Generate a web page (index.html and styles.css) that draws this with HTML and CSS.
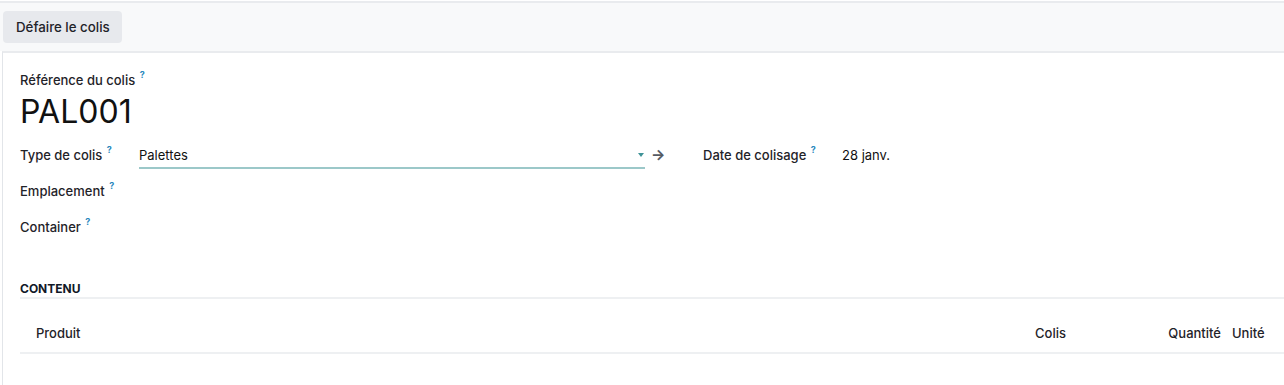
FILE: index.html
```html
<!DOCTYPE html>
<html lang="fr">
<head>
    <meta charset="UTF-8">
    <title>PAL001</title>
    <link rel="stylesheet" href="styles.css">
</head>
<body>
    <div class="control-panel">
        <button class="btn-secondary">Défaire le colis</button>
    </div>

    <div class="sheet">
        <div class="title-block">
            <div class="field-label">Référence du colis <sup class="help">?</sup></div>
            <h1 class="record-name">PAL001</h1>
        </div>

        <div class="groups">
            <div class="group">
                <div class="field-row">
                    <div class="field-label">Type de colis <sup class="help">?</sup></div>
                    <div class="many2one">
                        <div class="m2o-input">
                            <span>Palettes</span>
                            <span class="caret"></span>
                        </div>
                        <span class="external-link">&#8594;</span>
                    </div>
                </div>
                <div class="field-row">
                    <div class="field-label">Emplacement <sup class="help">?</sup></div>
                </div>
                <div class="field-row">
                    <div class="field-label">Container <sup class="help">?</sup></div>
                </div>
            </div>
            <div class="group">
                <div class="field-row">
                    <div class="field-label date-label">Date de colisage <sup class="help">?</sup></div>
                    <div class="field-value">28 janv.</div>
                </div>
            </div>
        </div>

        <div class="separator">Contenu</div>

        <table class="list-table">
            <thead>
                <tr>
                    <th class="col-product">Produit</th>
                    <th class="col-package">Colis</th>
                    <th class="col-qty">Quantité</th>
                    <th class="col-uom">Unité</th>
                </tr>
            </thead>
        </table>
    </div>
</body>
</html>
```

FILE: styles.css
```css
body {
    margin: 0;
    padding-top: 1px;
    background-color: #fff;
    font-family: Inter, "Noto Sans", sans-serif;
    font-size: 13px;
    color: #212529;
    overflow: hidden;
}

.control-panel {
    border-top: 2px solid #e9ebee;
    background-color: #f8f9fa;
    padding: 8px 3px 8px 3px;
    height: 32px;
}

.btn-secondary {
    height: 32px;
    padding: 0 12px 0 13px;
    border: none;
    border-radius: 4px;
    background-color: #e7e9ed;
    font-family: inherit;
    font-size: 13.3px;
    font-weight: 500;
    color: #1f2329;
}

.sheet {
    margin-left: 2px;
    border-top: 2px solid #e9ebee;
    border-left: 1px solid #e2e5e9;
    padding: 18px 0 0 17px;
    height: 314px;
}

.field-label {
    font-weight: 500;
    color: #1f2329;
    white-space: nowrap;
}

.help {
    font-size: 9px;
    color: #2a88bd;
    font-weight: 700;
    margin-left: 1px;
    position: relative;
    top: -2px;
}

.record-name {
    margin: 4px 0 0 0;
    font-size: 32px;
    font-weight: 400;
    line-height: 40px;
    color: #111;
}

.groups {
    display: grid;
    grid-template-columns: 683px 1fr;
    margin-top: 10px;
}

.field-row {
    display: flex;
    align-items: flex-start;
    height: 36px;
}

.field-row .field-label {
    width: 119px;
    padding-top: 4px;
}

.field-row .date-label {
    width: 139px;
}

.field-value {
    padding-top: 5px;
    color: #111;
}

.many2one {
    display: flex;
    align-items: flex-start;
}

.m2o-input {
    width: 506px;
    height: 25px;
    border-bottom: 2px solid #9cc8c9;
    display: flex;
    justify-content: space-between;
    align-items: center;
    color: #111;
}

.caret {
    width: 0;
    height: 0;
    margin-right: 1px;
    border-left: 3.5px solid transparent;
    border-right: 3.5px solid transparent;
    border-top: 4px solid #3f9397;
}

.external-link {
    margin-left: 6px;
    margin-top: 3px;
    font-size: 15px;
    font-weight: 700;
    color: #555a62;
}

.separator {
    margin-top: 31px;
    padding-bottom: 1px;
    border-bottom: 2px solid #eef0f2;
    text-transform: uppercase;
    font-size: 12px;
    font-weight: 700;
    color: #111827;
}

.list-table {
    width: 100%;
    margin-top: 12px;
    border-collapse: collapse;
}

.list-table th {
    height: 37px;
    padding-top: 3px;
    border-bottom: 2px solid #eef0f2;
    font-weight: 500;
    text-align: left;
    color: #1f2329;
    white-space: nowrap;
}

.col-product {
    padding-left: 16px;
}

.col-package {
    width: 124px;
}

.col-qty {
    width: 60px;
    text-align: right !important;
}

.col-uom {
    width: 35px;
    padding-left: 10px;
    padding-right: 17px;
}
```
